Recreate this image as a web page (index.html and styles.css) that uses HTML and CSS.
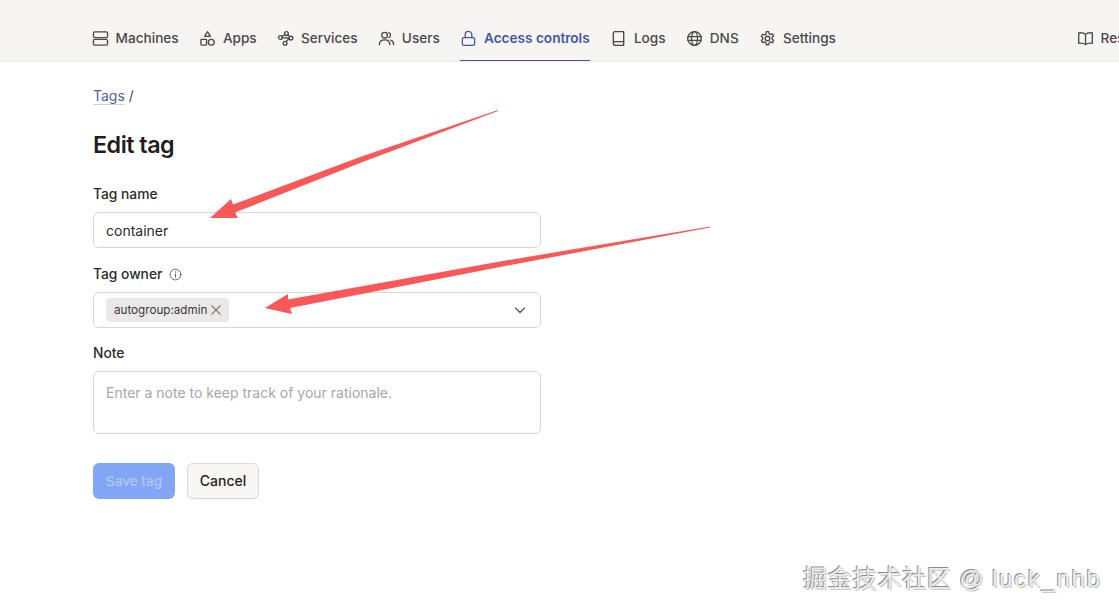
FILE: index.html
```html
<!DOCTYPE html>
<html lang="en">
<head>
<meta charset="utf-8">
<title>Edit tag</title>
<link rel="stylesheet" href="styles.css">
</head>
<body>
<header class="topbar">
  <nav class="nav">
    <a class="nav-item"><svg class="icon" viewBox="0 0 18 18"><rect x="1.500" y="2" width="15" height="6" rx="1.500"/><rect x="1.500" y="10" width="15" height="6" rx="1.500"/></svg>Machines</a>
    <a class="nav-item"><svg class="icon" viewBox="0 0 18 18"><path d="M9 1.800 12 6.800H6Z"/><rect x="2" y="10" width="6" height="6" rx=".8"/><circle cx="13" cy="13" r="3.100"/></svg>Apps</a>
    <a class="nav-item"><svg class="icon" viewBox="0 0 18 18"><circle cx="3.600" cy="8" r="2"/><circle cx="10" cy="3.800" r="2"/><circle cx="14.800" cy="8.600" r="2"/><circle cx="8.600" cy="14" r="2"/><path d="M5.300 6.900 8.300 4.900M11.700 5 13.300 7M12.900 9 9.500 12.300M5.600 8.200 12.800 8.500"/></svg>Services</a>
    <a class="nav-item"><svg class="icon" viewBox="0 0 18 18"><circle cx="7" cy="5.500" r="3"/><path d="M1.500 15.500c0-3 2.300-5 5.500-5s5.500 2 5.500 5M11.500 2.800a3 3 0 0 1 0 5.400M13.500 10.800c1.900.6 3 2.300 3 4.700"/></svg>Users</a>
    <a class="nav-item active"><svg class="icon" viewBox="0 0 18 18"><rect x="2.500" y="8" width="13" height="8.300" rx="1.800"/><path d="M5.500 8V5a3.500 3.500 0 0 1 7 0v3"/></svg>Access controls</a>
    <a class="nav-item"><svg class="icon" viewBox="0 0 18 18"><path d="M3.500 14V3.500A1.800 1.800 0 0 1 5.300 1.800H14.500V16.200H5.500A2 2 0 0 1 3.500 14ZM3.500 14A2 2 0 0 1 5.500 12.300H14.500"/></svg>Logs</a>
    <a class="nav-item"><svg class="icon" viewBox="0 0 18 18"><circle cx="9" cy="9" r="7.200"/><ellipse cx="9" cy="9" rx="3.200" ry="7.200"/><path d="M2 7H16M2 11H16"/></svg>DNS</a>
    <a class="nav-item"><svg class="icon" viewBox="0 0 18 18"><circle cx="9" cy="9" r="2.400"/><path d="M7.700 1.800h2.600l.4 2.100 1.500.9 2-.7 1.300 2.300-1.600 1.400v1.800l1.600 1.400-1.300 2.300-2-.7-1.500.9-.4 2.100H7.700l-.4-2.100-1.500-.9-2 .7-1.300-2.300 1.600-1.400V8.200L2.500 6.800l1.300-2.300 2 .7 1.500-.9Z"/></svg>Settings</a>
    <a class="nav-item resources"><svg class="icon" viewBox="0 0 18 18"><path d="M9 4.500C7.500 3 5 2.800 1.800 3V14C5 13.800 7.500 14 9 15.500 10.500 14 13 13.800 16.200 14V3C13 2.800 10.500 3 9 4.500ZM9 4.500V15.500"/></svg>Resources</a>
  </nav>
</header>

<main class="page">
  <div class="crumbs"><a class="crumb-link">Tags</a> /</div>
  <h1 class="title">Edit tag</h1>
  <form class="form">
    <div class="field">
      <div class="label">Tag name</div>
      <div class="control">container</div>
    </div>
    <div class="field">
      <div class="label">Tag owner<svg class="info" viewBox="0 0 14 14"><circle cx="7" cy="7" r="5.800"/><path d="M7 6.500V10M7 4V4.600"/></svg></div>
      <div class="control select">
        <span class="chip">autogroup:admin<svg class="chip-x" viewBox="0 0 12 12"><path d="M1.500 1.500 10.500 10.500M10.500 1.500 1.500 10.500"/></svg></span>
        <svg class="chevron" viewBox="0 0 12 12"><path d="M1.500 4 6 8.500 10.500 4"/></svg>
      </div>
    </div>
    <div class="field note">
      <div class="label">Note</div>
      <div class="control textarea">Enter a note to keep track of your rationale.</div>
    </div>
    <div class="actions">
      <span class="btn primary">Save tag</span>
      <span class="btn secondary">Cancel</span>
    </div>
  </form>
</main>

<svg class="arrows" viewBox="0 0 1119 610">
  <polygon points="498,110 360,157 233,204.500 231,199 210,218 238,218 235,212.500 360,163 498,111"/>
  <polygon points="710,226.500 500,261.500 288,299.500 288,294 265,308 292,314 290,308 500,267 710,227.500"/>
</svg>
<div class="watermark">掘金技术社区 @ <span class="handle">luck_nhb</span></div>
</body>
</html>
```
FILE: styles.css
```css
* { box-sizing: border-box; }
html, body { margin: 0; height: 100%; }
body {
  position: relative;
  overflow: hidden;
  background: #fff;
  color: #1f1e1e;
  font-family: Inter, "Liberation Sans", sans-serif;
  font-size: 14px;
}
.topbar {
  height: 62px;
  background: #f7f5f4;
  border-bottom: 1px solid #eeecea;
  padding-left: 91.600px;
  overflow: hidden;
}
.nav { display: flex; height: 62px; gap: 20.250px; width: 1200px; }
.nav-item {
  display: flex;
  align-items: center;
  gap: 7px;
  height: 62px;
  padding-top: 14px;
  color: #4a4848;
  font-size: 13.600px;
  font-weight: 500;
  white-space: nowrap;
}
.icon {
  width: 17px;
  height: 17px;
  fill: none;
  stroke: currentColor;
  stroke-width: 1.400;
  stroke-linecap: round;
  stroke-linejoin: round;
  flex: none;
}
.active {
  color: #3f57a8;
  font-weight: 600;
  box-shadow: inset 0 -2px 0 #3f57a8;
}
.resources { margin-left: 220.400px; }

.page { width: 541px; padding-left: 93px; }
.crumbs { margin-top: 24px; line-height: 20px; color: #4a4848; }
.crumb-link { color: #4d62a8; border-bottom: 1px solid #c9d2ec; }
.title {
  margin: 23px 0 0;
  font-size: 23.300px;
  line-height: 32px;
  font-weight: 600;
  letter-spacing: -0.5px;
}
.form { margin-top: 22px; display: flex; flex-direction: column; gap: 15px; }
.field { display: flex; flex-direction: column; gap: 9px; }
.note { margin-top: -1px; }
.label {
  display: flex;
  align-items: center;
  gap: 7px;
  height: 20px;
  padding-top: 2px;
  font-size: 13.800px;
  font-weight: 500;
  color: #2b2a2a;
}
.info {
  width: 13px;
  height: 13px;
  fill: none;
  stroke: #5a5858;
  stroke-width: 1;
  stroke-linecap: round;
}
.control {
  height: 36px;
  border: 1px solid #d9d7d6;
  border-radius: 6px;
  padding: 0 12px;
  display: flex;
  align-items: center;
  color: #2b2a2a;
  background: #fff;
}
.select { justify-content: space-between; padding-right: 14px; }
.chip {
  display: flex;
  align-items: center;
  gap: 3px;
  height: 24px;
  padding: 0 7px 0 8px;
  background: #ebe9e8;
  border-radius: 4px;
  font-size: 11.650px;
  color: #3a3939;
}
.chip-x { width: 12px; height: 12px; fill: none; stroke: #7d7b7b; stroke-width: 1.100; }
.chevron { width: 12px; height: 12px; fill: none; stroke: #5a5858; stroke-width: 1.300; stroke-linecap: round; stroke-linejoin: round; }
.textarea { height: 63px; align-items: flex-start; padding-top: 12px; line-height: 18px; color: #a9a7a6; }
.actions { display: flex; gap: 12px; margin-top: 14px; }
.btn {
  height: 36px;
  border-radius: 6px;
  display: flex;
  align-items: center;
  justify-content: center;
  font-weight: 500;
}
.primary { width: 82px; background: #82a6f5; color: #b0c8f8; font-size: 13.600px; }
.secondary {
  width: 72px;
  padding-bottom: 1px;
  background: #f9f7f6;
  border: 1px solid #dcdad8;
  color: #1f1e1e;
  box-shadow: 0 1px 1px rgba(0,0,0,.05);
}

.arrows { position: absolute; left: 0; top: 0; width: 1119px; height: 610px; pointer-events: none; }
.arrows polygon { fill: #f95858; }
.watermark {
  position: absolute;
  left: 803px;
  top: 563px;
  font-family: "Liberation Sans", "Noto Sans CJK SC", sans-serif;
  font-size: 24px;
  line-height: 32px;
  letter-spacing: .8px;
  color: #ececec;
  white-space: nowrap;
  text-shadow: -1px -1px 0 #8c8c8c, 1px 1px 0 #c9c9c9;
}
.handle { letter-spacing: 1.700px; }
```
